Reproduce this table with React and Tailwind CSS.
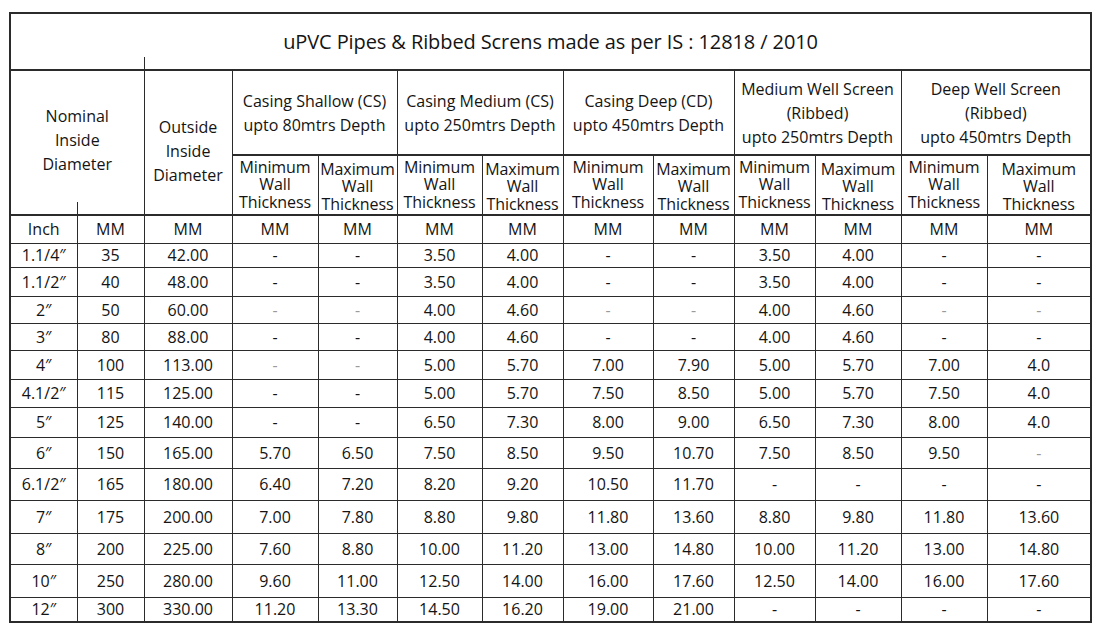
const groups = [
  ["Casing Shallow (CS)", "upto 80mtrs Depth"],
  ["Casing Medium (CS)", "upto 250mtrs Depth"],
  ["Casing Deep (CD)", "upto 450mtrs Depth"],
  ["Medium Well Screen", "(Ribbed)", "upto 250mtrs Depth"],
  ["Deep Well Screen", "(Ribbed)", "upto 450mtrs Depth"],
];

// "~" = faint dash as in the scan
const rows = [
  { h: "h-[24px]", v: ["1.1/4″", "35", "42.00", "-", "-", "3.50", "4.00", "-", "-", "3.50", "4.00", "-", "-"] },
  { h: "h-[29px]", v: ["1.1/2″", "40", "48.00", "-", "-", "3.50", "4.00", "-", "-", "3.50", "4.00", "-", "-"] },
  { h: "h-[27px]", v: ["2″", "50", "60.00", "~", "~", "4.00", "4.60", "~", "~", "4.00", "4.60", "~", "~"] },
  { h: "h-[27px]", v: ["3″", "80", "88.00", "-", "-", "4.00", "4.60", "-", "-", "4.00", "4.60", "-", "-"] },
  { h: "h-[29px]", v: ["4″", "100", "113.00", "~", "~", "5.00", "5.70", "7.00", "7.90", "5.00", "5.70", "7.00", "4.0"] },
  { h: "h-[28px]", v: ["4.1/2″", "115", "125.00", "-", "-", "5.00", "5.70", "7.50", "8.50", "5.00", "5.70", "7.50", "4.0"] },
  { h: "h-[30px]", v: ["5″", "125", "140.00", "-", "-", "6.50", "7.30", "8.00", "9.00", "6.50", "7.30", "8.00", "4.0"] },
  { h: "h-[31px]", v: ["6″", "150", "165.00", "5.70", "6.50", "7.50", "8.50", "9.50", "10.70", "7.50", "8.50", "9.50", "~"] },
  { h: "h-[32px]", v: ["6.1/2″", "165", "180.00", "6.40", "7.20", "8.20", "9.20", "10.50", "11.70", "-", "-", "-", "-"] },
  { h: "h-[33px]", v: ["7″", "175", "200.00", "7.00", "7.80", "8.80", "9.80", "11.80", "13.60", "8.80", "9.80", "11.80", "13.60"] },
  { h: "h-[31px]", v: ["8″", "200", "225.00", "7.60", "8.80", "10.00", "11.20", "13.00", "14.80", "10.00", "11.20", "13.00", "14.80"] },
  { h: "h-[33px]", v: ["10″", "250", "280.00", "9.60", "11.00", "12.50", "14.00", "16.00", "17.60", "12.50", "14.00", "16.00", "17.60"] },
  { h: "h-[25px]", v: ["12″", "300", "330.00", "11.20", "13.30", "14.50", "16.20", "19.00", "21.00", "-", "-", "-", "-"] },
];

const cols = [
  "w-[67px]", "w-[67px]", "w-[88px]", "w-[86px]", "w-[79px]", "w-[85px]", "w-[81px]",
  "w-[90px]", "w-[81px]", "w-[81px]", "w-[86px]", "w-[86px]", "w-[104px]",
];

const cell = "border border-[#2b2b2b] text-center align-middle p-0";

const Cell = ({ v }) => {
  if (v === "~") return <td className={cell + " text-[#9a9a9a]"}>-</td>;
  return <td className={cell}>{v}</td>;
};

export default function App() {
  return (
    <div className="w-[1098px] h-[631px] bg-white overflow-hidden pt-[12px] pl-[9px] font-['Open_Sans',sans-serif] text-[#141414]">
      <table className="table-fixed border-collapse w-[1081px] border-2 border-[#2b2b2b] text-[16px] leading-[18px]">
        <colgroup>
          {cols.map((c, i) => (
            <col key={i} className={c} />
          ))}
        </colgroup>
        <thead>
          <tr className="h-[57px]">
            <th colSpan={13} className="relative border-b-2 border-[#2b2b2b] font-normal text-[20px] tracking-[-0.1px]">
              uPVC Pipes &amp; Ribbed Screns made as per IS : 12818 / 2010
              {/* stray tick left in the scanned sheet */}
              <span className="absolute left-[133px] bottom-0 h-[12px] border-l border-[#2b2b2b]" />
            </th>
          </tr>
          <tr className="h-[85px]">
            <th colSpan={2} rowSpan={2} className={cell + " relative font-normal leading-[24px] pb-[6px]"}>
              Nominal
              <br />
              Inside
              <br />
              Diameter
              <span className="absolute left-[66px] bottom-0 h-[12px] border-l border-[#2b2b2b]" />
            </th>
            <th rowSpan={2} className={cell + " font-normal leading-[24px] pt-[16px]"}>
              Outside
              <br />
              Inside
              <br />
              Diameter
            </th>
            {groups.map((g, i) => (
              <th key={i} colSpan={2} className={cell + " font-normal leading-[24px]"}>
                {g.map((t, j) => (
                  <div key={j} className="whitespace-nowrap">
                    {t}
                  </div>
                ))}
              </th>
            ))}
          </tr>
          <tr className="h-[60px]">
            {groups.map((g, i) => [
              <th key={i + "a"} className={cell + " border-t-2 font-normal leading-[17.5px] tracking-[-0.1px]"}>
                Minimum
                <br />
                Wall
                <br />
                Thickness
              </th>,
              <th key={i + "b"} className={cell + " border-t-2 font-normal leading-[17.5px] pt-[4px] tracking-[-0.1px]"}>
                Maximum
                <br />
                Wall
                <br />
                Thickness
              </th>,
            ])}
          </tr>
        </thead>
        <tbody>
          <tr className="h-[28px]">
            <td className={cell + " border-t-2"}>Inch</td>
            {Array.from({ length: 12 }).map((_, i) => (
              <td key={i} className={cell + " border-t-2"}>
                MM
              </td>
            ))}
          </tr>
          {rows.map((r, i) => (
            <tr key={i} className={r.h}>
              {r.v.map((v, j) => (
                <Cell key={j} v={v} />
              ))}
            </tr>
          ))}
        </tbody>
      </table>
    </div>
  );
}
